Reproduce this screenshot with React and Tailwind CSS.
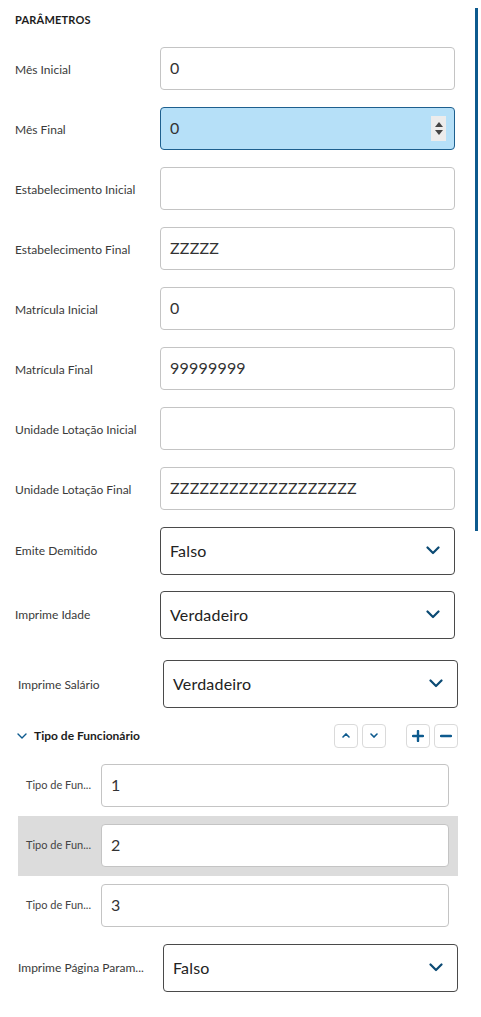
import React from 'react';

const fields = [
  { label: 'Mês Inicial', value: '0' },
  { label: 'Mês Final', value: '0', focused: true },
  { label: 'Estabelecimento Inicial', value: '' },
  { label: 'Estabelecimento Final', value: 'ZZZZZ' },
  { label: 'Matrícula Inicial', value: '0' },
  { label: 'Matrícula Final', value: '99999999' },
  { label: 'Unidade Lotação Inicial', value: '' },
  { label: 'Unidade Lotação Final', value: 'ZZZZZZZZZZZZZZZZZZZ' },
];

function Chevron() {
  return (
    <svg width="14" height="9" viewBox="0 0 14 9" fill="none">
      <path d="M1.5 1.5 L7 7 L12.5 1.5" stroke="#0b4a74" strokeWidth="2.2" strokeLinecap="round" strokeLinejoin="round" />
    </svg>
  );
}

function TextInput({ value, focused }) {
  return (
    <div
      className={
        'relative flex h-[43px] flex-1 items-center rounded-[4px] border px-[9px] text-[16px] tracking-[0.2px] text-[#333] ' +
        (focused ? 'border-[#1d5f8e] bg-[#b6e0f8]' : 'border-[#c4c4c4] bg-white')
      }
    >
      {value}
      {focused && (
        <div className="absolute right-[8px] top-[8px] flex h-[25px] w-[15px] flex-col items-center justify-center gap-[3px] bg-[#ececec]">
          <svg width="8" height="5" viewBox="0 0 8 5"><path d="M0 5 L4 0 L8 5 Z" fill="#444" /></svg>
          <svg width="8" height="5" viewBox="0 0 8 5"><path d="M0 0 L4 5 L8 0 Z" fill="#444" /></svg>
        </div>
      )}
    </div>
  );
}

function Select({ value }) {
  return (
    <div className="flex h-[48px] flex-1 items-center justify-between rounded-[4px] border border-[#4a4a4a] bg-white pl-[9px] pr-[14px] text-[16px] tracking-[0.2px] text-[#222]">
      <span>{value}</span>
      <Chevron />
    </div>
  );
}

function SmallBtn({ children }) {
  return (
    <div className="flex h-[24px] w-[24px] items-center justify-center rounded-[4px] border border-[#dadada] bg-white">
      {children}
    </div>
  );
}

export default function App() {
  return (
    <div className="relative min-h-screen bg-white" style={{ fontFamily: 'Lato, "Open Sans", sans-serif' }}>
      <div className="absolute right-[3px] top-[8px] h-[523px] w-[3px] bg-[#0d5a8e]" />
      <div className="w-[455px] pl-[15px] pt-[12px]">
        <div className="text-[11px] font-bold tracking-[0.2px] text-[#1c1c1c]">PARÂMETROS</div>

        <div className="mt-[18px] flex flex-col gap-[17px]">
          {fields.map((f) => (
            <div key={f.label} className="flex items-center">
              <div className="w-[145px] pt-[3px] text-[12px] text-[#3a3a3a]">{f.label}</div>
              <TextInput value={f.value} focused={f.focused} />
            </div>
          ))}
        </div>

        <div className="mt-[17px] flex items-center">
          <div className="w-[145px] text-[12px] text-[#3a3a3a]">Emite Demitido</div>
          <Select value="Falso" />
        </div>
        <div className="mt-[16px] flex items-center">
          <div className="w-[145px] text-[12px] text-[#3a3a3a]">Imprime Idade</div>
          <Select value="Verdadeiro" />
        </div>
      </div>

      <div className="w-[458px] pl-[18px]">
        <div className="mt-[21px] flex items-center">
          <div className="w-[145px] pt-[3px] text-[12px] text-[#3a3a3a]">Imprime Salário</div>
          <Select value="Verdadeiro" />
        </div>

        <div className="mt-[16px] flex h-[24px] items-center">
          <svg width="10" height="6" viewBox="0 0 10 6" fill="none" className="ml-[-1px]">
            <path d="M1 1 L5 5 L9 1" stroke="#0d5a8e" strokeWidth="1.4" strokeLinecap="round" strokeLinejoin="round" />
          </svg>
          <div className="ml-[7px] text-[12px] font-bold text-[#1c1c1c]">Tipo de Funcionário</div>
          <div className="ml-auto flex gap-[4px]">
            <SmallBtn>
              <svg width="8" height="5" viewBox="0 0 8 5" fill="none"><path d="M1 4 L4 1 L7 4" stroke="#0d5a8e" strokeWidth="1.6" strokeLinecap="round" /></svg>
            </SmallBtn>
            <SmallBtn>
              <svg width="8" height="5" viewBox="0 0 8 5" fill="none"><path d="M1 1 L4 4 L7 1" stroke="#0d5a8e" strokeWidth="1.6" strokeLinecap="round" /></svg>
            </SmallBtn>
            <div className="w-[12px]" />
            <SmallBtn>
              <svg width="12" height="12" viewBox="0 0 12 12" fill="none"><path d="M6 1 V11 M1 6 H11" stroke="#0d5a8e" strokeWidth="2.4" strokeLinecap="round" /></svg>
            </SmallBtn>
            <SmallBtn>
              <svg width="12" height="12" viewBox="0 0 12 12" fill="none"><path d="M1 6 H11" stroke="#0d5a8e" strokeWidth="2.4" strokeLinecap="round" /></svg>
            </SmallBtn>
          </div>
        </div>

        <div className="mt-[8px] flex flex-col">
          {['1', '2', '3'].map((v, i) => (
            <div key={v} className={'flex h-[60px] items-start pl-[8px] pr-[9px] pt-[8px] ' + (i === 1 ? 'bg-[#dcdcdc]' : '')}>
              <div className="flex h-[43px] w-[75px] items-center text-[11px] text-[#444]">Tipo de Fun...</div>
              <TextInput value={v} />
            </div>
          ))}
        </div>

        <div className="mt-[8px] flex items-center">
          <div className="w-[145px] text-[12px] text-[#3a3a3a]">Imprime Página Param...</div>
          <Select value="Falso" />
        </div>
      </div>
    </div>
  );
}
